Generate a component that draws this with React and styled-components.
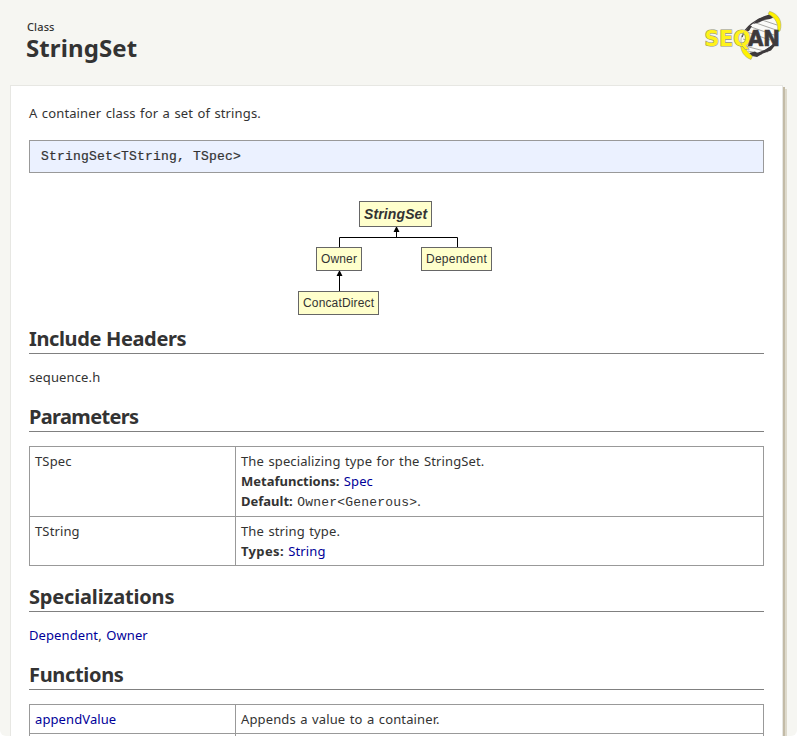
import React from 'react';
import styled, { createGlobalStyle } from 'styled-components';

const GlobalStyle = createGlobalStyle`
  * { box-sizing: border-box; }
  html { background: #fff; }
  body {
    margin: 0;
    color: #333;
    font: 13px/20px "Noto Sans", sans-serif;
    letter-spacing: 0.13px;
    word-spacing: 0.9px;
  }
`;

const Page = styled.div`
  height: 736px;
  overflow: hidden;
  background: #f6f6f2;
  border-radius: 0 0 6px 6px;
`;

const Header = styled.header`
  display: flex;
  justify-content: space-between;
  height: 85px;
  padding: 10px 14px 0 26px;
`;

const Kind = styled.div`
  margin-top: 9px;
  padding-left: 1px;
  font-size: 11px;
  font-weight: 500;
  line-height: 16px;
`;

const Title = styled.h1`
  margin: 0;
  font-size: 24px;
  line-height: 26px;
  font-weight: 700;
  letter-spacing: 0.1px;
`;

const LogoSvg = styled.svg`
  display: block;
  width: 80px;
  height: 52px;
`;

const Card = styled.main`
  width: 773px;
  height: 680px;
  margin-left: 10px;
  padding: 17px 18px 0;
  background: #fff;
  border: 1px solid #e7e7e3;
  box-shadow: 2px 2px 0 #c3bba7, 4px 4px 0 #ddd9cb;
`;

const Paragraph = styled.p`
  margin: 0;
  height: 20px;
`;

const Signature = styled.pre`
  margin: 17px 0 0;
  height: 33px;
  padding: 0 11px;
  border: 1px solid #999;
  background: #ebf1ff;
  font: 13px/31px "Liberation Mono", monospace;
  letter-spacing: 0.2px;
  word-spacing: 0;
  -webkit-text-stroke: 0.2px #333;
`;

const Diagram = styled.div`
  position: relative;
  height: 150px;
`;

const Edges = styled.svg`
  position: absolute;
  left: 0;
  top: 0;
  width: 735px;
  height: 150px;
`;

const Node = styled.div`
  position: absolute;
  left: ${(p) => p.$x}px;
  top: ${(p) => p.$y}px;
  width: ${(p) => p.$w}px;
  height: ${(p) => (p.$root ? 26 : 24)}px;
  padding-left: 4px;
  border: 1px solid #666;
  background: #ffc;
  white-space: nowrap;
  font: ${(p) => (p.$root ? 'italic 700 14px/24px' : '400 12px/22px')} "Liberation Sans", Arial, sans-serif;
  letter-spacing: ${(p) => p.$track}px;
`;

const SectionTitle = styled.h2`
  height: 31px;
  margin: 0 0 13px;
  border-bottom: 1px solid #808080;
  font-size: 20px;
  line-height: 32px;
  font-weight: 700;
  letter-spacing: ${(p) => p.$track}px;
  word-spacing: 0;
`;

const SectionBody = styled.div`
  height: 34px;
`;

const Table = styled.div`
  margin: 14px 0 15px;
  border: 1px solid #999;
`;

const Row = styled.div`
  display: grid;
  grid-template-columns: 205px 1fr;
  & + & { border-top: 1px solid #999; }
`;

const Cell = styled.div`
  padding: 4px 5px;
  & + & { border-left: 1px solid #999; }
`;

const Line = styled.div`
  height: ${(p) => (p.$code ? 21 : 20)}px;
  line-height: ${(p) => (p.$code ? 21 : 20)}px;
  white-space: nowrap;
`;

const Label = styled.b`
  letter-spacing: ${(p) => p.$track}px;
`;

const Link = styled.a`
  color: #000099;
  text-decoration: none;
  letter-spacing: 0.1px;
`;

const Code = styled.code`
  font: 13px "Liberation Mono", monospace;
  letter-spacing: 0.2px;
`;

function Logo() {
  return (
    <LogoSvg viewBox="703 10 80 52">
      <path d="M742 39C745 27 757 17 771 15C781 17 780 36 775 43C767 53 756 57 749 55Z" fill="#fafaf8" />
      <g stroke="#a8a8a4" strokeWidth="1">
        <path d="M762 20L777 25M756 23L779 31M751 27L777 36M747 32L770 40M745 46L768 52M743 39L750 41M748 51L762 54" />
      </g>
      <path d="M742 37C745 27 756 19 769 15.5" fill="none" stroke="#3e3a3c" strokeWidth="1.4" />
      <path d="M745 32L749 26L752 26L749 31ZM753 24L759 18.5L765 17L770 14L775 17L770 19L764 20L759 22.5Z" fill="#3e3a3c" />
      <path d="M751 55C761 54 772 49 777 40" fill="none" stroke="#3e3a3c" strokeWidth="2" />
      <path d="M749 53L755 51.5L758 53.5L765 50L771 46L777 43L771 50.5L763 53.5L757 57L752 56Z" fill="#3e3a3c" />
      <path d="M768 14L769.5 11.3C779 14 783 22 780 31L777.5 32C778.5 24 776 18 768 14Z" fill="#fff200" stroke="#99997a" strokeWidth="0.5" />
      <path d="M740.5 44L744.5 43C745 49 748 53 752.5 56L751 59.5C744 57 740.5 51 740.5 44Z" fill="#fff200" stroke="#99997a" strokeWidth="0.5" />
      <g fontFamily="DejaVu Sans, sans-serif" fontWeight="700" fontSize="20.5" wordSpacing="0" letterSpacing="0">
        <text x="704.5" y="45.5" textLength="46" lengthAdjust="spacingAndGlyphs" fill="#fff21a" stroke="#929276" strokeWidth="1.2" paintOrder="stroke">SEQ</text>
        <text x="748" y="45.5" textLength="32" lengthAdjust="spacingAndGlyphs" fill="#3e3a3c" stroke="#3e3a3c" strokeWidth="0.7">AN</text>
      </g>
      <path d="M744 32C741 36 740 41 742 45" fill="none" stroke="#aaa99a" strokeWidth="0.8" />
    </LogoSvg>
  );
}

function Inheritance() {
  return (
    <Diagram>
      <Edges viewBox="29 173 735 150">
        <path d="M339.5 247V237.5H457.5V247M396.5 237V229M339.5 291V273" fill="none" stroke="#000" />
        <path d="M396.5 226L399.5 232H393.5ZM339.5 270L342.5 276H336.5Z" fill="#000" />
      </Edges>
      <Node $x={330} $y={28} $w={73} $root $track={0.12}>StringSet</Node>
      <Node $x={287} $y={74} $w={46} $track={0.15}>Owner</Node>
      <Node $x={392} $y={74} $w={71} $track={0.25}>Dependent</Node>
      <Node $x={269} $y={118} $w={81} $track={0.15}>ConcatDirect</Node>
    </Diagram>
  );
}

export default function App() {
  return (
    <>
      <GlobalStyle />
      <Page>
        <Header>
          <div>
            <Kind>Class</Kind>
            <Title>StringSet</Title>
          </div>
          <Logo />
        </Header>
        <Card>
          <Paragraph>A container class for a set of strings.</Paragraph>
          <Signature>{'StringSet<TString, TSpec>'}</Signature>
          <Inheritance />
          <SectionTitle $track={-0.36}>Include Headers</SectionTitle>
          <SectionBody>sequence.h</SectionBody>
          <SectionTitle $track={-0.65}>Parameters</SectionTitle>
          <Table>
            <Row>
              <Cell><Line>TSpec</Line></Cell>
              <Cell>
                <Line>The specializing type for the StringSet.</Line>
                <Line><Label $track={0}>Metafunctions:</Label> <Link>Spec</Link></Line>
                <Line $code><Label $track={0}>Default:</Label> <Code>{'Owner<Generous>'}</Code>.</Line>
              </Cell>
            </Row>
            <Row>
              <Cell><Line>TString</Line></Cell>
              <Cell>
                <Line>The string type.</Line>
                <Line><Label $track={0.35}>Types:</Label> <Link>String</Link></Line>
              </Cell>
            </Row>
          </Table>
          <SectionTitle $track={-0.17}>Specializations</SectionTitle>
          <SectionBody><Link>Dependent</Link>, <Link>Owner</Link></SectionBody>
          <SectionTitle $track={-0.33}>Functions</SectionTitle>
          <Table>
            <Row>
              <Cell><Line><Link>appendValue</Link></Line></Cell>
              <Cell><Line>Appends a value to a container.</Line></Cell>
            </Row>
            <Row>
              <Cell><Line /></Cell>
              <Cell><Line /></Cell>
            </Row>
          </Table>
        </Card>
      </Page>
    </>
  );
}
